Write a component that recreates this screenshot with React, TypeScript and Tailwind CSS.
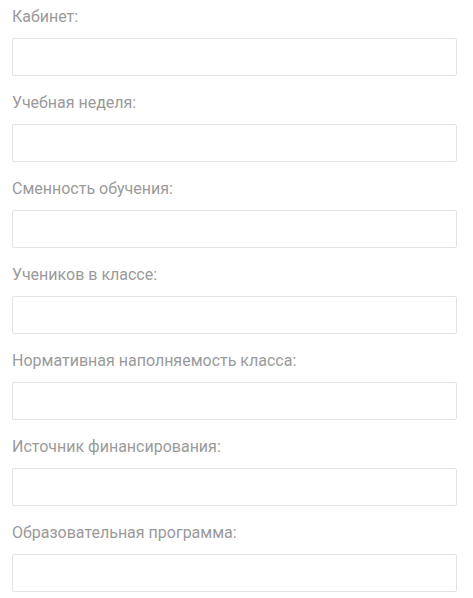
const fields = [
  'Кабинет:',
  'Учебная неделя:',
  'Сменность обучения:',
  'Учеников в классе:',
  'Нормативная наполняемость класса:',
  'Источник финансирования:',
  'Образовательная программа:',
]

export default function App() {
  return (
    <div className="min-h-[598px] bg-white px-3 pt-[7px] font-['Roboto',sans-serif]">
      {fields.map((label) => (
        <div key={label} className="mb-[17px] w-[445px]">
          <label className="block text-[16px] leading-[20px] text-[#9a9a9a]">{label}</label>
          <input
            type="text"
            className="mt-[11px] block h-[38px] w-full rounded-[2px] border border-[#e3e3e3] bg-white px-3 text-[14px] outline-none"
          />
        </div>
      ))}
    </div>
  )
}
